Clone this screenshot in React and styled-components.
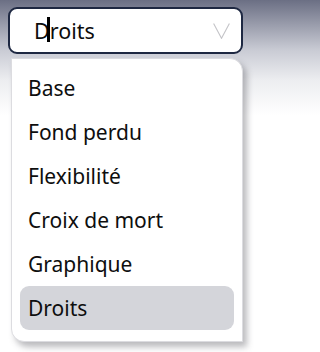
import React from "react";
import styled, { createGlobalStyle } from "styled-components";

const Global = createGlobalStyle`
  html, body { margin: 0; padding: 0; }
  body {
    width: 254px;
    height: 352px;
    overflow: hidden;
    font-family: "Noto Sans", "DejaVu Sans", sans-serif;
    background: linear-gradient(to bottom, #6b6f84 0px, #9a9dac 25px, #c9cbd4 50px, #ecedf0 80px, #ffffff 115px);
  }
`;

const Page = styled.div`
  position: relative;
  width: 254px;
  height: 352px;
  padding: 7px 11px 0 8px;
  box-sizing: border-box;
  display: flex;
  flex-direction: column;
  gap: 4px;
`;

const SelectBox = styled.div`
  position: relative;
  height: 47px;
  box-sizing: border-box;
  border: 2px solid #1e2842;
  border-radius: 9px;
  background: #ffffff;
  display: flex;
  align-items: center;
  padding: 0 8px 0 24px;
  font-size: 21.5px;
  color: #0c0c0c;
`;

const Value = styled.span`
  position: relative;
  flex: 1;
`;

const Caret = styled.span`
  position: absolute;
  left: 13px;
  top: 1px;
  width: 3px;
  height: 25px;
  background: #000;
`;

const Chevron = styled.svg`
  width: 17px;
  height: 16px;
  margin-right: 3px;
`;

const Menu = styled.ul`
  list-style: none;
  margin: 0 0 0 3px;
  padding: 7px 8px 11px 8px;
  background: #ffffff;
  border: 1px solid #dcdce0;
  border-radius: 0 13px 0 13px;
  box-shadow: 4px 5px 6px rgba(60, 60, 70, 0.35);
`;

const Item = styled.li`
  height: 44px;
  display: flex;
  align-items: center;
  padding-left: 8px;
  border-radius: 9px;
  font-size: 21px;
  color: #0e0e0e;
  background: ${(p) => (p.$selected ? "#d4d5da" : "transparent")};
`;

const items = ["Base", "Fond perdu", "Flexibilité", "Croix de mort", "Graphique", "Droits"];

export default function App() {
  return (
    <>
      <Global />
      <Page>
        <SelectBox>
          <Value>
            Droits
            <Caret />
          </Value>
          <Chevron viewBox="0 0 17 16">
            <path d="M0.6 0.5 L8.5 15.3 L16.4 0.5" fill="none" stroke="#c4c4c8" strokeWidth="1.1" />
          </Chevron>
        </SelectBox>
        <Menu>
          {items.map((t) => (
            <Item key={t} $selected={t === "Droits"}>
              {t}
            </Item>
          ))}
        </Menu>
      </Page>
    </>
  );
}
